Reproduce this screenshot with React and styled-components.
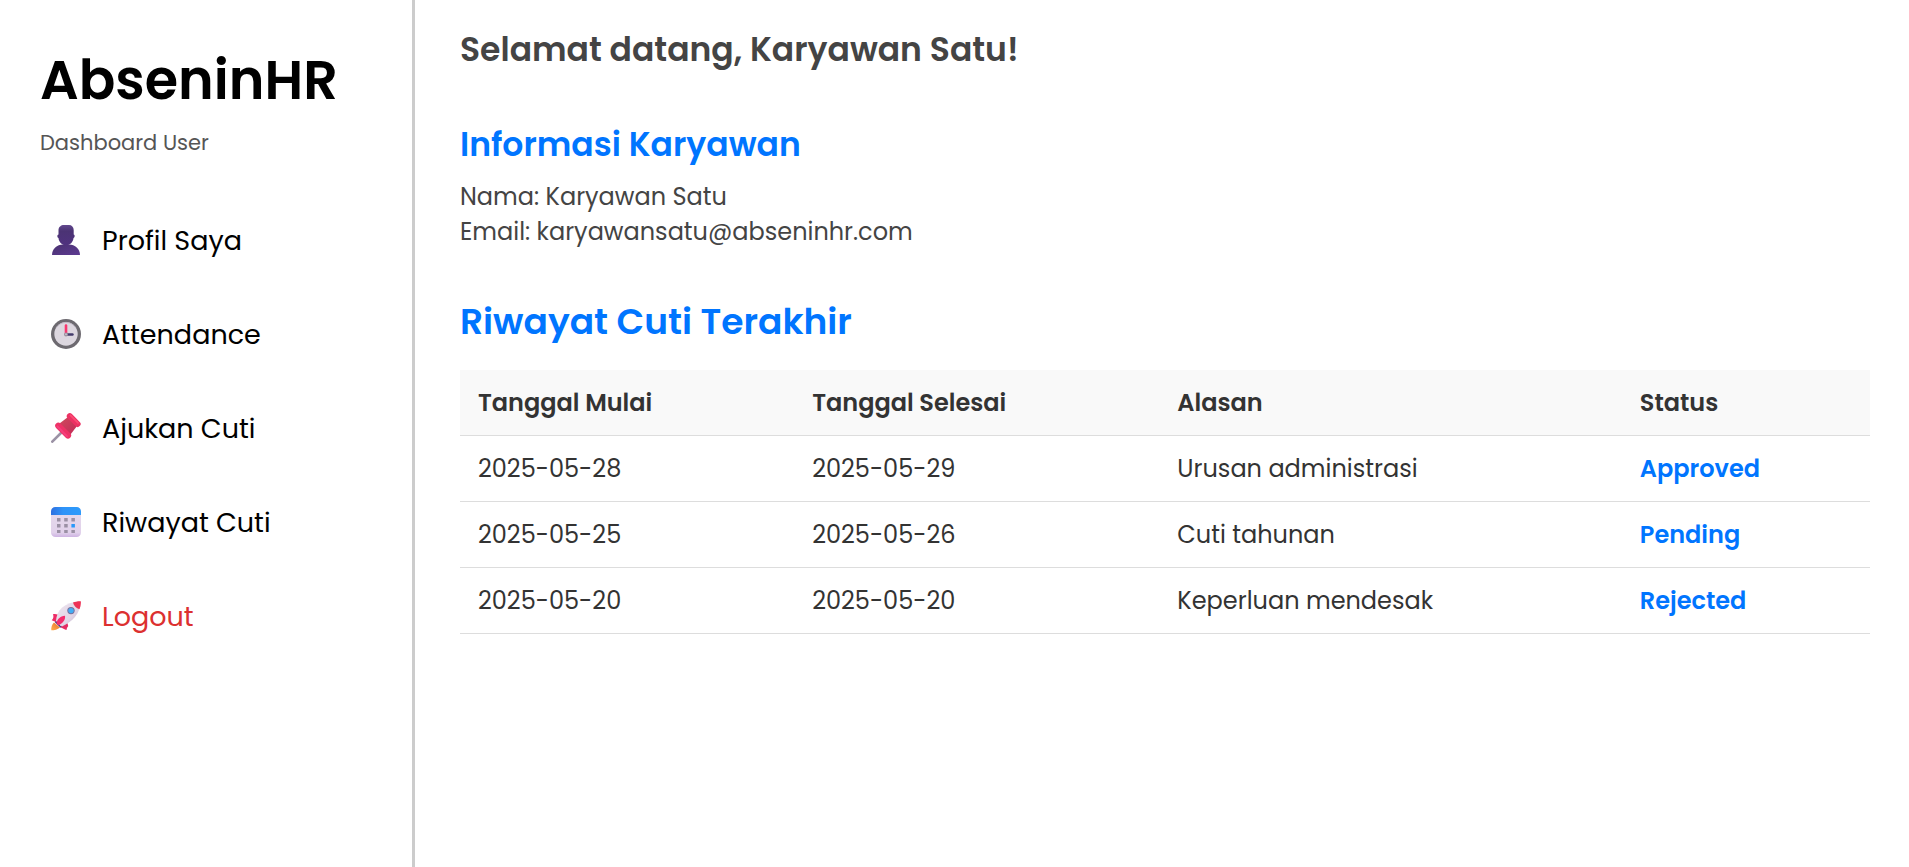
import React from 'react';
import styled, { createGlobalStyle } from 'styled-components';

const GlobalStyle = createGlobalStyle`
  *, *::before, *::after { box-sizing: border-box; }
  body {
    margin: 0;
    background: #fff;
    color: #333;
    font-family: "Poppins", "Inter", "Liberation Sans", sans-serif;
  }
`;

const Layout = styled.div`
  display: flex;
  min-height: 100vh;
`;

const Sidebar = styled.aside`
  flex: none;
  width: 415px;
  padding: 40px;
  border-right: 3px solid #ccc;
`;

const Brand = styled.h1`
  margin: 0;
  color: #000;
  font-size: 54px;
  line-height: 80px;
  font-weight: 600;
`;

const Subtitle = styled.p`
  margin: 7px 0 0;
  color: #555;
  font-size: 21px;
  line-height: 32px;
`;

const Menu = styled.nav`
  display: flex;
  flex-direction: column;
  gap: 28px;
  margin-top: 49px;
`;

const MenuLink = styled.a`
  display: flex;
  align-items: center;
  gap: 21px;
  padding: 12px 11px;
  color: ${({ $danger }) => ($danger ? '#dc3030' : '#000')};
  font-size: 27px;
  line-height: 42px;
  text-decoration: none;

  svg {
    flex: none;
    width: 30px;
    height: 30px;
    margin-bottom: 2px;
  }
`;

const Content = styled.main`
  flex: 1;
  min-width: 0;
  padding: 25px 39px 24px 45px;
`;

const Welcome = styled.h2`
  margin: 0;
  color: #444;
  font-size: 33px;
  line-height: 50px;
  font-weight: 600;
`;

const Section = styled.section`
  margin-top: ${({ $gap }) => $gap}px;
`;

const SectionTitle = styled.h3`
  margin: 0;
  color: #0075ff;
  font-size: ${({ $large }) => ($large ? 36 : 33)}px;
  line-height: 50px;
  font-weight: 600;
`;

const Info = styled.p`
  margin: 0;
  color: #444;
  font-size: 24px;
  line-height: 35px;
`;

const InfoList = styled.div`
  margin-top: 9px;
`;

const Table = styled.table`
  width: 100%;
  margin-top: 23px;
  border-collapse: collapse;
  table-layout: fixed;
  font-size: 24px;
  line-height: 35px;
  text-align: left;
`;

const Col = styled.col`
  width: ${({ $share }) => $share}%;
`;

const HeadCell = styled.th`
  padding: 15px 18px;
  border-bottom: 1px solid #ddd;
  background: #f9f9f9;
  font-weight: 600;
`;

const Cell = styled.td`
  padding: 15px 18px;
  border-bottom: 1px solid #ddd;
`;

const StatusCell = styled(Cell)`
  color: #0075ff;
  font-weight: 600;
`;

const ProfileIcon = () => (
  <svg viewBox="0 0 30 30" aria-hidden="true">
    <defs>
      <linearGradient id="bust" x1="0" y1="0" x2="1" y2="1">
        <stop offset="0" stopColor="#4a3270" />
        <stop offset="1" stopColor="#5d3a92" />
      </linearGradient>
      <linearGradient id="head" x1="0" y1="0" x2="0" y2="1">
        <stop offset="0" stopColor="#62488e" />
        <stop offset=".3" stopColor="#4b3374" />
        <stop offset="1" stopColor="#50327f" />
      </linearGradient>
    </defs>
    <path d="M1 30C1 24 6 19.500 12 19.500h6c6 0 11 4.500 11 10.500z" fill="url(#bust)" />
    <path d="M7.500 5C7.500 2 10 0 13 0h5c2.800 0 4.700 2 4.700 5v4.600c1.300 0 1.300 3.200-.2 3.400C22.200 17 19 20.300 15 20.300S7.800 17 7.500 13C6 12.800 6 9.600 7.500 9.600z" fill="url(#head)" />
  </svg>
);

const ClockIcon = () => (
  <svg viewBox="0 0 30 30" aria-hidden="true">
    <circle cx="15" cy="15" r="15" fill="#6d6a70" />
    <circle cx="15" cy="15" r="11.700" fill="#dcd7df" />
    <path d="M5 9A11.700 11.700 0 0 1 25 9" fill="none" stroke="#c1bac7" />
    <path d="M15 6.500V15" stroke="#f8376f" strokeWidth="2.600" strokeLinecap="round" />
    <path d="M15 15.500h6.500" stroke="#433b6b" strokeWidth="2.400" strokeLinecap="round" />
    <circle cx="15" cy="15.500" r="2" fill="#9a92a0" />
    <circle cx="15" cy="15.300" r=".8" fill="#d8d2dc" />
  </svg>
);

const PinIcon = () => (
  <svg viewBox="0 0 30 30" aria-hidden="true">
    <defs>
      <linearGradient id="pin-neck" x1="0" y1="0" x2="1" y2="1">
        <stop offset="0" stopColor="#cf4a5c" />
        <stop offset="1" stopColor="#c22a58" />
      </linearGradient>
    </defs>
    <path d="M1.300 28.700L11 19" stroke="#9b92a5" strokeWidth="2.600" strokeLinecap="round" />
    <path d="M8.500 10.500L17 4l9 9-6.500 8.500z" fill="url(#pin-neck)" />
    <path d="M7.300 12.700L17 22.500" stroke="#ee3267" strokeWidth="6.200" strokeLinecap="round" />
    <path d="M6.500 13.500l9.500 9.700" stroke="#f43f7c" strokeWidth="2" strokeLinecap="round" />
    <path d="M18.800 3.200l7.800 7.800" stroke="#ec3163" strokeWidth="6" strokeLinecap="round" />
    <path d="M19.500 2.300l7.500 7.500" stroke="#fb4a73" strokeWidth="1.800" strokeLinecap="round" />
  </svg>
);

const CalendarIcon = () => (
  <svg viewBox="0 0 30 30" aria-hidden="true">
    <defs>
      <linearGradient id="calendar-page" x1="0" y1="0" x2="0" y2="1">
        <stop offset="0" stopColor="#e6dbeb" />
        <stop offset=".85" stopColor="#e1d1eb" />
        <stop offset="1" stopColor="#cdb3e2" />
      </linearGradient>
      <linearGradient id="calendar-top">
        <stop offset="0" stopColor="#2e70e0" />
        <stop offset=".4" stopColor="#2e93f8" />
        <stop offset="1" stopColor="#2e9bfb" />
      </linearGradient>
    </defs>
    <rect width="30" height="30" rx="4.500" fill="url(#calendar-page)" />
    <path d="M0 8V4.500A4.500 4.500 0 0 1 4.500 0h21A4.500 4.500 0 0 1 30 4.500V8z" fill="url(#calendar-top)" />
    <path d="M6 11h3.500v3.500H6zM13.200 11h3.500v3.500h-3.500zM20.400 11h3.500v3.500h-3.500zM6 17h3.500v3.500H6zM13.200 17h3.500v3.500h-3.500zM6 23h3.500v3H6zM13.200 23h3.500v3h-3.500zM20.400 23h3.500v3h-3.500z" fill="#9b90a5" />
    <path d="M20.400 17h3.500v3.500h-3.500z" fill="#2898fa" />
  </svg>
);

const RocketIcon = () => (
  <svg viewBox="0 0 30 30" aria-hidden="true">
    <defs>
      <linearGradient id="rocket-body" x1="0" y1="0" x2="1" y2="1">
        <stop offset="0" stopColor="#eee6f0" />
        <stop offset=".6" stopColor="#e2d6e6" />
        <stop offset="1" stopColor="#bfaec8" />
      </linearGradient>
      <linearGradient id="rocket-flame" x1="1" y1="0" x2="0" y2="1">
        <stop offset="0" stopColor="#e8702c" />
        <stop offset="1" stopColor="#ffad4c" />
      </linearGradient>
    </defs>
    <path d="M3 21.500l6 5C6.500 28.500 3.500 29.300.3 29.300 0 27 .7 23.500 3 21.500z" fill="url(#rocket-flame)" />
    <path d="M2 13.200c2.500-.7 5 .2 7.500 1.300l-3.500 7-5.300-2.300c1.700-1.700 2.200-3.700 1.300-6z" fill="#ed2b66" />
    <path d="M15.500 20c.8 2.500 1.800 4 1.700 5.200-1 .8-1.300 2-1.700 3.800-2-.7-4-2-5.800-2.500l1-3.500z" fill="#e52b63" />
    <path d="M5 20C5.500 9.500 13 1.300 29 .3c1 12.500-8 20.500-18 25.200z" fill="url(#rocket-body)" />
    <path d="M4.800 20l5.700 5.700-1 1-5.500-5.200z" fill="#4b3c83" />
    <path d="M22 1.500C24.500.6 27 0 29.800.2c.3 2.700-.2 5.300-1.300 8-3.200-.8-5.800-3.500-6.500-6.700z" fill="#ee3155" />
    <path d="M5.500 22.500C6 18.500 9 15.200 14 14.800c.7 4-2.300 7.700-6.500 9.500z" fill="#f52c6c" />
    <circle cx="20" cy="9.600" r="3.700" fill="#796f9c" />
    <circle cx="20" cy="9.600" r="2.700" fill="#42adf5" />
  </svg>
);

const menuItems = [
  { label: 'Profil Saya', icon: ProfileIcon },
  { label: 'Attendance', icon: ClockIcon },
  { label: 'Ajukan Cuti', icon: PinIcon },
  { label: 'Riwayat Cuti', icon: CalendarIcon },
  { label: 'Logout', icon: RocketIcon, danger: true },
];

const leaves = [
  { start: '2025-05-28', end: '2025-05-29', reason: 'Urusan administrasi', status: 'Approved' },
  { start: '2025-05-25', end: '2025-05-26', reason: 'Cuti tahunan', status: 'Pending' },
  { start: '2025-05-20', end: '2025-05-20', reason: 'Keperluan mendesak', status: 'Rejected' },
];

export default function App() {
  return (
    <Layout>
      <GlobalStyle />
      <Sidebar>
        <Brand>AbseninHR</Brand>
        <Subtitle>Dashboard User</Subtitle>
        <Menu>
          {menuItems.map(({ label, icon: Icon, danger }) => (
            <MenuLink key={label} href="#" $danger={danger}>
              <Icon />
              {label}
            </MenuLink>
          ))}
        </Menu>
      </Sidebar>
      <Content>
        <Welcome>Selamat datang, Karyawan Satu!</Welcome>
        <Section $gap={45}>
          <SectionTitle>Informasi Karyawan</SectionTitle>
          <InfoList>
            <Info>Nama: Karyawan Satu</Info>
            <Info>Email: karyawansatu@abseninhr.com</Info>
          </InfoList>
        </Section>
        <Section $gap={48}>
          <SectionTitle $large>Riwayat Cuti Terakhir</SectionTitle>
          <Table>
            <colgroup>
              <Col $share={23.7} />
              <Col $share={25.9} />
              <Col $share={32.8} />
              <Col $share={17.6} />
            </colgroup>
            <thead>
              <tr>
                <HeadCell scope="col">Tanggal Mulai</HeadCell>
                <HeadCell scope="col">Tanggal Selesai</HeadCell>
                <HeadCell scope="col">Alasan</HeadCell>
                <HeadCell scope="col">Status</HeadCell>
              </tr>
            </thead>
            <tbody>
              {leaves.map((leave) => (
                <tr key={leave.start}>
                  <Cell>{leave.start}</Cell>
                  <Cell>{leave.end}</Cell>
                  <Cell>{leave.reason}</Cell>
                  <StatusCell>{leave.status}</StatusCell>
                </tr>
              ))}
            </tbody>
          </Table>
        </Section>
      </Content>
    </Layout>
  );
}
